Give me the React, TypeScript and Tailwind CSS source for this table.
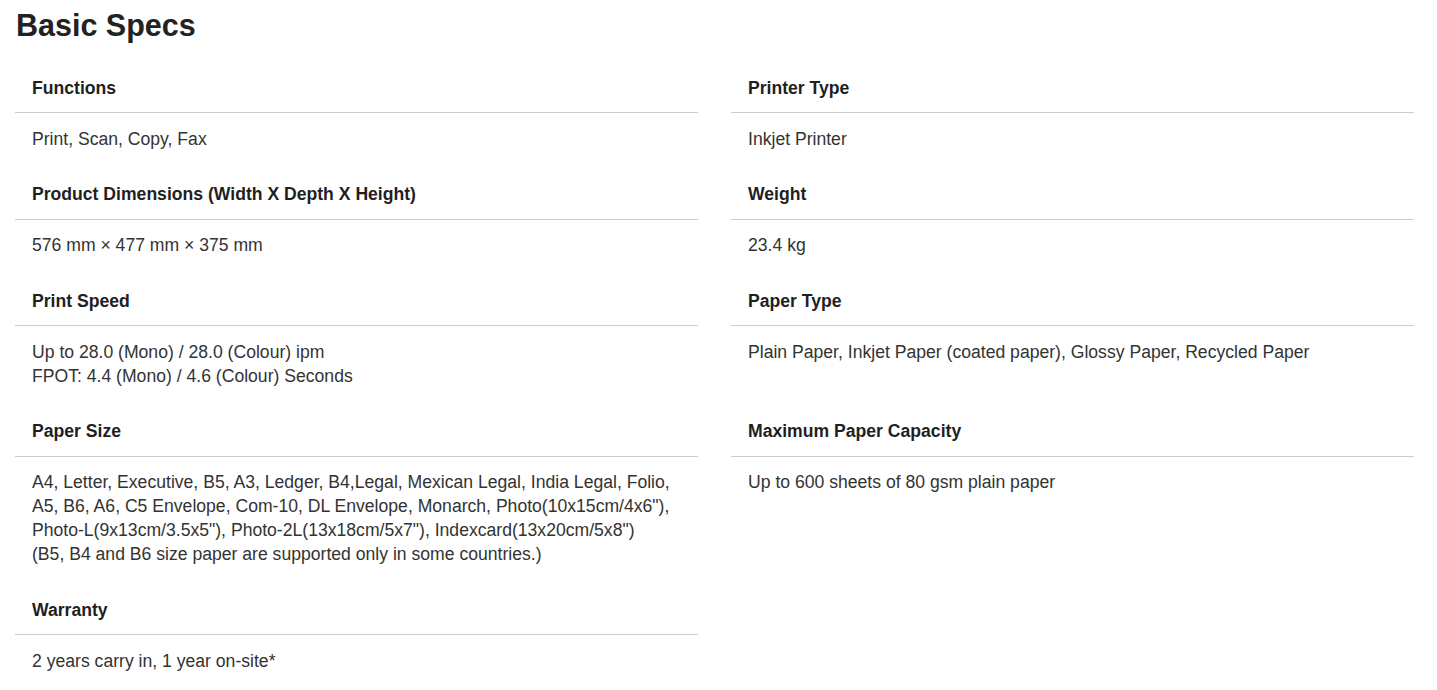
import React from 'react';

interface Spec {
  label: string;
  value: string[];
}

const specs: Spec[] = [
  { label: 'Functions', value: ['Print, Scan, Copy, Fax'] },
  { label: 'Printer Type', value: ['Inkjet Printer'] },
  { label: 'Product Dimensions (Width X Depth X Height)', value: ['576 mm × 477 mm × 375 mm'] },
  { label: 'Weight', value: ['23.4 kg'] },
  { label: 'Print Speed', value: ['Up to 28.0 (Mono) / 28.0 (Colour) ipm', 'FPOT: 4.4 (Mono) / 4.6 (Colour) Seconds'] },
  { label: 'Paper Type', value: ['Plain Paper, Inkjet Paper (coated paper), Glossy Paper, Recycled Paper'] },
  {
    label: 'Paper Size',
    value: [
      'A4, Letter, Executive, B5, A3, Ledger, B4,Legal, Mexican Legal, India Legal, Folio,',
      'A5, B6, A6, C5 Envelope, Com-10, DL Envelope, Monarch, Photo(10x15cm/4x6"),',
      'Photo-L(9x13cm/3.5x5"), Photo-2L(13x18cm/5x7"), Indexcard(13x20cm/5x8")',
      '(B5, B4 and B6 size paper are supported only in some countries.)',
    ],
  },
  { label: 'Maximum Paper Capacity', value: ['Up to 600 sheets of 80 gsm plain paper'] },
  { label: 'Warranty', value: ['2 years carry in, 1 year on-site*'] },
];

const SpecItem: React.FC<{ spec: Spec }> = ({ spec }) => (
  <div>
    <div className="border-b border-[#cccccc] pl-[17px] pt-[13.5px] pb-[12.5px] text-[17.6px] leading-[24px] font-bold text-[#1f1f1f]">
      {spec.label}
    </div>
    <div className="pl-[17px] pt-[13.5px] pb-[18px] text-[17.6px] leading-[24px] text-[#333333]">
      {spec.value.map((line) => (
        <div key={line}>{line}</div>
      ))}
    </div>
  </div>
);

export default function App() {
  return (
    <div className="min-h-screen bg-white pl-[15px] pr-[23px] font-[family-name:Liberation_Sans,Arial,sans-serif]">
      <h1 className="pl-px pt-[7px] text-[30.5px] leading-[36px] font-bold text-[#222222]">Basic Specs</h1>
      <div className="mt-[19px] grid grid-cols-2 gap-x-[33px]">
        {specs.map((spec) => (
          <SpecItem key={spec.label} spec={spec} />
        ))}
      </div>
    </div>
  );
}
